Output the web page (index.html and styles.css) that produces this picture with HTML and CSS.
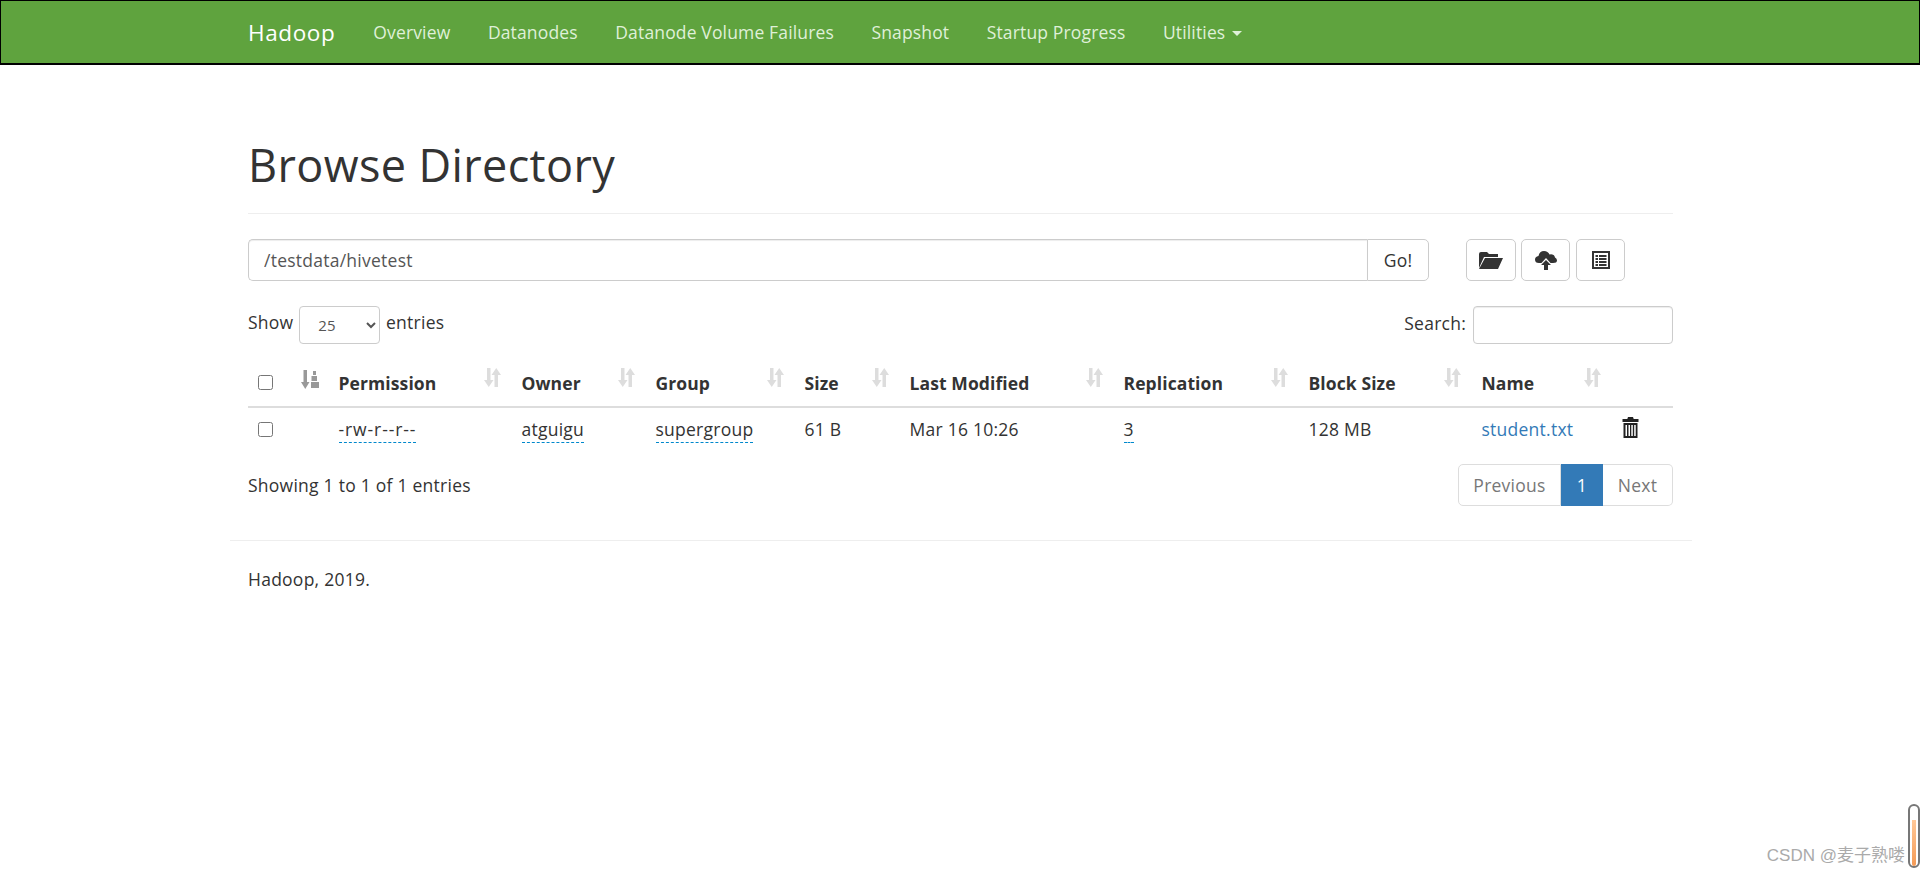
FILE: index.html
```html
<!DOCTYPE html>
<html lang="en">
<head>
  <meta charset="UTF-8">
  <title>Browsing HDFS</title>
  <link rel="stylesheet" href="styles.css">
</head>
<body>
  <!-- Navbar -->
  <nav class="navbar">
    <a class="brand" href="#">Hadoop</a>
    <a class="nav-link" href="#">Overview</a>
    <a class="nav-link" href="#">Datanodes</a>
    <a class="nav-link" href="#">Datanode Volume Failures</a>
    <a class="nav-link" href="#">Snapshot</a>
    <a class="nav-link" href="#">Startup Progress</a>
    <a class="nav-link" href="#">Utilities <span class="caret"></span></a>
  </nav>

  <div class="container">
    <div class="page-header">
      <h1>Browse Directory</h1>
    </div>

    <!-- Path bar -->
    <div class="path-row">
      <div class="input-group">
        <input class="path-input" type="text" value="/testdata/hivetest">
        <button class="go-btn">Go!</button>
      </div>
      <div class="tool-btns">
        <button class="icon-btn icon-btn-wide">
          <svg width="26" height="20" viewBox="0 0 26 20"><path class="ic" d="M1 18 1 4Q1 2 3 2L9 2 11 4 20 4 20 7 6 7 1 18ZM7 8 25 8 20 19 1 19Z"/></svg>
        </button>
        <button class="icon-btn icon-btn-upload">
          <svg width="22" height="22" viewBox="0 0 22 22"><path class="ic" d="M4 14Q0 14 0 10.500 0 7.500 3.500 7 4.500 2 9 2 13 2 14.500 5.500 19 4.500 20 8.500 22 9.500 22 11.500 22 14 18 14L15.500 14 11 9 6.500 14ZM11 11 16 16 13 16 13 21 9 21 9 16 6 16Z"/></svg>
        </button>
        <button class="icon-btn">
          <svg width="18" height="18" viewBox="0 0 18 18"><path class="ic" fill-rule="evenodd" d="M0 0 18 0 18 18 0 18ZM2 2 2 16 16 16 16 2ZM3.500 4 6 4 6 6 3.500 6ZM7 4 14.500 4 14.500 6 7 6ZM3.500 7 6 7 6 9 3.500 9ZM7 7 14.500 7 14.500 9 7 9ZM3.500 10 6 10 6 12 3.500 12ZM7 10 14.500 10 14.500 12 7 12ZM3.500 13 6 13 6 15 3.500 15ZM7 13 14.500 13 14.500 15 7 15Z"/></svg>
        </button>
      </div>
    </div>

    <!-- Length and search -->
    <div class="controls">
      <label class="length">Show
        <select class="length-select"><option>25</option></select>
        entries</label>
      <label class="search">Search: <input class="search-input" type="text"></label>
    </div>

    <table class="files">
      <colgroup>
        <col class="c-check"><col class="c-sort"><col class="c-perm"><col class="c-owner"><col class="c-group"><col class="c-size"><col class="c-mod"><col class="c-rep"><col class="c-block"><col class="c-name"><col class="c-del">
      </colgroup>
      <thead>
        <tr>
          <th><input class="check" type="checkbox"></th>
          <th><svg class="sort-main" width="18" height="19" viewBox="0 0 18 19"><path d="M2.500 0 6 0 6 12 8.500 12 4.250 19 0 12 2.500 12ZM12 1 15 1 15 5 12 5ZM10.500 6 16 6 16 11 10.500 11ZM10 12 18 12 18 18 10 18Z"/></svg></th>
          <th class="sortable">Permission<svg class="sort" width="17" height="19" viewBox="0 0 17 19"><use href="#arrows"/></svg></th>
          <th class="sortable">Owner<svg class="sort" width="17" height="19" viewBox="0 0 17 19"><use href="#arrows"/></svg></th>
          <th class="sortable">Group<svg class="sort" width="17" height="19" viewBox="0 0 17 19"><use href="#arrows"/></svg></th>
          <th class="sortable">Size<svg class="sort" width="17" height="19" viewBox="0 0 17 19"><use href="#arrows"/></svg></th>
          <th class="sortable">Last Modified<svg class="sort" width="17" height="19" viewBox="0 0 17 19"><use href="#arrows"/></svg></th>
          <th class="sortable">Replication<svg class="sort" width="17" height="19" viewBox="0 0 17 19"><use href="#arrows"/></svg></th>
          <th class="sortable">Block Size<svg class="sort" width="17" height="19" viewBox="0 0 17 19"><use href="#arrows"/></svg></th>
          <th class="sortable">Name<svg class="sort" width="17" height="19" viewBox="0 0 17 19"><use href="#arrows"/></svg></th>
          <th></th>
        </tr>
      </thead>
      <tbody>
        <tr>
          <td><input class="check check-row" type="checkbox"></td>
          <td></td>
          <td><span class="editable editable-perm">-rw-r--r--</span></td>
          <td><span class="editable">atguigu</span></td>
          <td><span class="editable">supergroup</span></td>
          <td>61 B</td>
          <td>Mar 16 10:26</td>
          <td><span class="editable">3</span></td>
          <td>128 MB</td>
          <td><a class="file-link" href="#">student.txt</a></td>
          <td>
            <svg class="trash" width="17" height="21" viewBox="0 0 17 21"><path class="ic-dark" fill-rule="evenodd" d="M6 0 11 0 11.700 2 16.500 2 16.500 5 .5 5 .5 2 5.300 2ZM1.500 6 15.500 6 15.500 21 1.500 21ZM3.500 8 3.500 19 5 19 5 8ZM6.500 8 6.500 19 8 19 8 8ZM9.300 8 9.300 19 10.800 19 10.800 8ZM12.200 8 12.200 19 13.700 19 13.700 8Z"/></svg>
          </td>
        </tr>
      </tbody>
    </table>

    <div class="table-foot">
      <div class="info">Showing 1 to 1 of 1 entries</div>
      <div class="pagination">
        <a class="page page-prev" href="#">Previous</a>
        <a class="page page-current" href="#">1</a>
        <a class="page page-next" href="#">Next</a>
      </div>
    </div>
  </div>

  <div class="footer-wrap">
    <hr class="footer-line">
    <p class="footer-text">Hadoop, 2019.</p>
  </div>

  <!-- Screenshot overlays -->
  <div class="watermark">CSDN @麦子熟喽</div>
  <div class="meter"><div class="meter-fill"></div></div>

  <svg width="0" height="0" class="defs">
    <defs>
      <g id="arrows"><path d="M3 0 6.500 0 6.500 12 9.500 12 4.750 19 0 12 3 12ZM10.500 19 14 19 14 7 17 7 12.250 0 7.500 7 10.500 7Z"/></g>
    </defs>
  </svg>
</body>
</html>
```

FILE: styles.css
```css
* { box-sizing: border-box; }
body { margin: 0; font-family: "Open Sans", "Noto Sans", sans-serif; font-size: 17.5px; line-height: 25px; letter-spacing: .25px; color: #333; background: #fff; height: 879px; overflow: hidden; position: relative; }
a { text-decoration: none; }
button, input, select { font-family: inherit; letter-spacing: inherit; }

.navbar { display: flex; align-items: center; height: 65px; padding-left: 247px; background: #5fa33e; border: 1px solid #000; border-bottom-width: 2px; }
.brand { color: #fff; font-size: 22.5px; letter-spacing: .6px; margin-right: 38px; }
.nav-link { color: #dff0d8; margin-right: 37.500px; font-size: 17.5px; letter-spacing: .15px; }
.caret { display: inline-block; width: 0; height: 0; margin-left: 2px; vertical-align: middle; border-top: 5px solid #dff0d8; border-left: 5px solid transparent; border-right: 5px solid transparent; }

.container { width: 1425px; margin-left: 248px; }
.page-header { height: 149px; padding-top: 70px; border-bottom: 1px solid #eee; }
h1 { margin: 0; font-size: 45px; font-weight: 400; line-height: 60px; letter-spacing: .38px; color: #333; }

.path-row { display: flex; margin-top: 25px; }
.input-group { display: flex; width: 1181px; height: 42px; }
.path-input { flex: 1; padding: 0 15px; font-size: 17.5px; color: #555; border: 1px solid #ccc; border-right: 0; border-radius: 5px 0 0 5px; box-shadow: inset 0 1px 1px rgba(0,0,0,.075); }
.go-btn { width: 62px; font-size: 17.5px; color: #333; background: #fff; border: 1px solid #ccc; border-radius: 0 5px 5px 0; }
.tool-btns { display: flex; gap: 5px; margin-left: 37px; }
.icon-btn { display: flex; align-items: center; justify-content: center; width: 49px; height: 42px; padding: 0; background: #fff; border: 1px solid #ccc; border-radius: 5px; }
.icon-btn-wide { width: 50px; }
.icon-btn-upload { margin-right: 1px; }
.ic { fill: #333; }
.ic-dark { fill: #222; }

.controls { display: flex; justify-content: space-between; align-items: center; height: 38px; margin-top: 25px; }
.length, .search { position: relative; top: -2px; }
.length-select { position: relative; top: 2px; width: 81px; height: 38px; margin: 0 1px; padding-left: 14px; font-size: 15px; color: #555; background: #fff; border: 1px solid #ccc; border-radius: 4px; }
.search { display: flex; align-items: center; gap: 7px; }
.search-input { position: relative; top: 2px; width: 200px; height: 38px; border: 1px solid #ccc; border-radius: 4px; box-shadow: inset 0 1px 1px rgba(0,0,0,.075); }

.files { width: 100%; margin-top: 11px; table-layout: fixed; border-collapse: collapse; }
.c-check { width: 42px; }
.c-sort { width: 36px; }
.c-perm { width: 183px; }
.c-owner { width: 134px; }
.c-group { width: 149px; }
.c-size { width: 105px; }
.c-mod { width: 214px; }
.c-rep { width: 185px; }
.c-block { width: 173px; }
.c-name { width: 140px; }
.files th { position: relative; height: 52px; padding: 5px 12.500px 0; text-align: left; font-weight: 700; letter-spacing: .1px; color: #333; border-bottom: 2px solid #ddd; }
.files td { height: 47px; padding: 0 12.500px 4px; color: #333; }
.sort { position: absolute; right: 8px; top: 13px; fill: #ddd; }
.sort-main { display: block; margin-top: -7px; margin-left: -1px; fill: #999; }
.check { display: block; width: 15px; height: 15px; margin: -1px 0 0 -3px; }
.check-row { margin-top: 1px; }
.files th:nth-child(2) { padding-left: 12px; }
.editable { border-bottom: 1px dashed #08c; padding-bottom: 1px; }
.editable-perm { letter-spacing: .9px; }
.file-link { color: #337ab7; }
.trash { display: block; margin: -4px 0 0 0; }

.table-foot { display: flex; justify-content: space-between; align-items: center; height: 42px; margin-top: 10px; }
.pagination { display: flex; height: 42px; }
.page { display: flex; align-items: center; justify-content: center; color: #777; background: #fff; border: 1px solid #ddd; }
.page-prev { width: 103px; border-radius: 5px 0 0 5px; }
.page-current { width: 42px; color: #fff; background: #337ab7; border-color: #337ab7; }
.page-next { width: 70px; border-left: 0; border-radius: 0 5px 5px 0; }

.footer-wrap { width: 1462px; margin-left: 230px; }
.footer-line { margin: 34px 0 0; border: 0; border-top: 1px solid #eee; }
.footer-text { margin: 26px 0 0 18px; }

.watermark { position: absolute; right: 15px; bottom: 13px; font-family: "Liberation Sans", "Noto Sans CJK SC", sans-serif; font-size: 17px; line-height: 20px; letter-spacing: 0; color: #aaa; }
.meter { position: absolute; right: 0; top: 804px; width: 12px; height: 64px; padding: 14px 2px 0; background: #fff; border: 2px solid #777; border-radius: 6px; }
.meter-fill { height: 100%; background: linear-gradient(180deg, #ffc898, #f59a55); border-radius: 0 0 3px 3px; }
.defs { position: absolute; }
```
